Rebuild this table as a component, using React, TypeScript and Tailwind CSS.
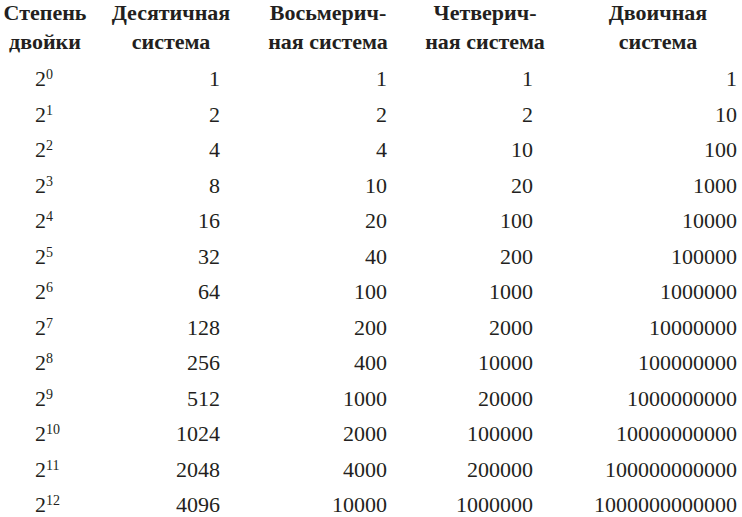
const headers = [
  ["Степень", "двойки"],
  ["Десятичная", "система"],
  ["Восьмерич-", "ная система"],
  ["Четверич-", "ная система"],
  ["Двоичная", "система"],
];

// column layout: width, header padding, numbers right padding
const cols = [
  { w: "w-[90px]", head: "", num: "" },
  { w: "w-[162px]", head: "", num: "pr-[32px]" },
  { w: "w-[152px]", head: "", num: "pr-[17px]" },
  { w: "w-[162px]", head: "", num: "pr-[33px]" },
  { w: "w-[176px]", head: "pl-2", num: "pr-[5px]" },
];

const rows = Array.from({ length: 13 }, (_, n) => {
  const dec = 2 ** n;
  return [n, dec.toString(), dec.toString(8), dec.toString(4), dec.toString(2)];
});

const App = () => {
  return (
    <div
      className="w-[742px] h-[517px] overflow-hidden bg-white text-[#231f20]"
      style={{ fontFamily: '"Liberation Serif", "Times New Roman", serif' }}
    >
      <div className="flex -mt-[2px] text-[22px] font-bold leading-[29px]">
        {headers.map((h, i) => (
          <div key={i} className={`${cols[i].w} ${cols[i].head} shrink-0 text-center whitespace-nowrap`}>
            <div>{h[0]}</div>
            <div>{h[1]}</div>
          </div>
        ))}
      </div>

      <div className="mt-[5px] text-[22px] leading-[35.5px]">
        {rows.map((r) => (
          <div key={r[0]} className="flex h-[35.5px]">
            <div className={`${cols[0].w} shrink-0 pl-[35px]`}>
              2<sup className="text-[14px] -top-[7px]">{r[0]}</sup>
            </div>
            {r.slice(1).map((v, i) => (
              <div key={i} className={`${cols[i + 1].w} ${cols[i + 1].num} shrink-0 text-right`}>
                {v}
              </div>
            ))}
          </div>
        ))}
      </div>
    </div>
  );
};

export default App;
